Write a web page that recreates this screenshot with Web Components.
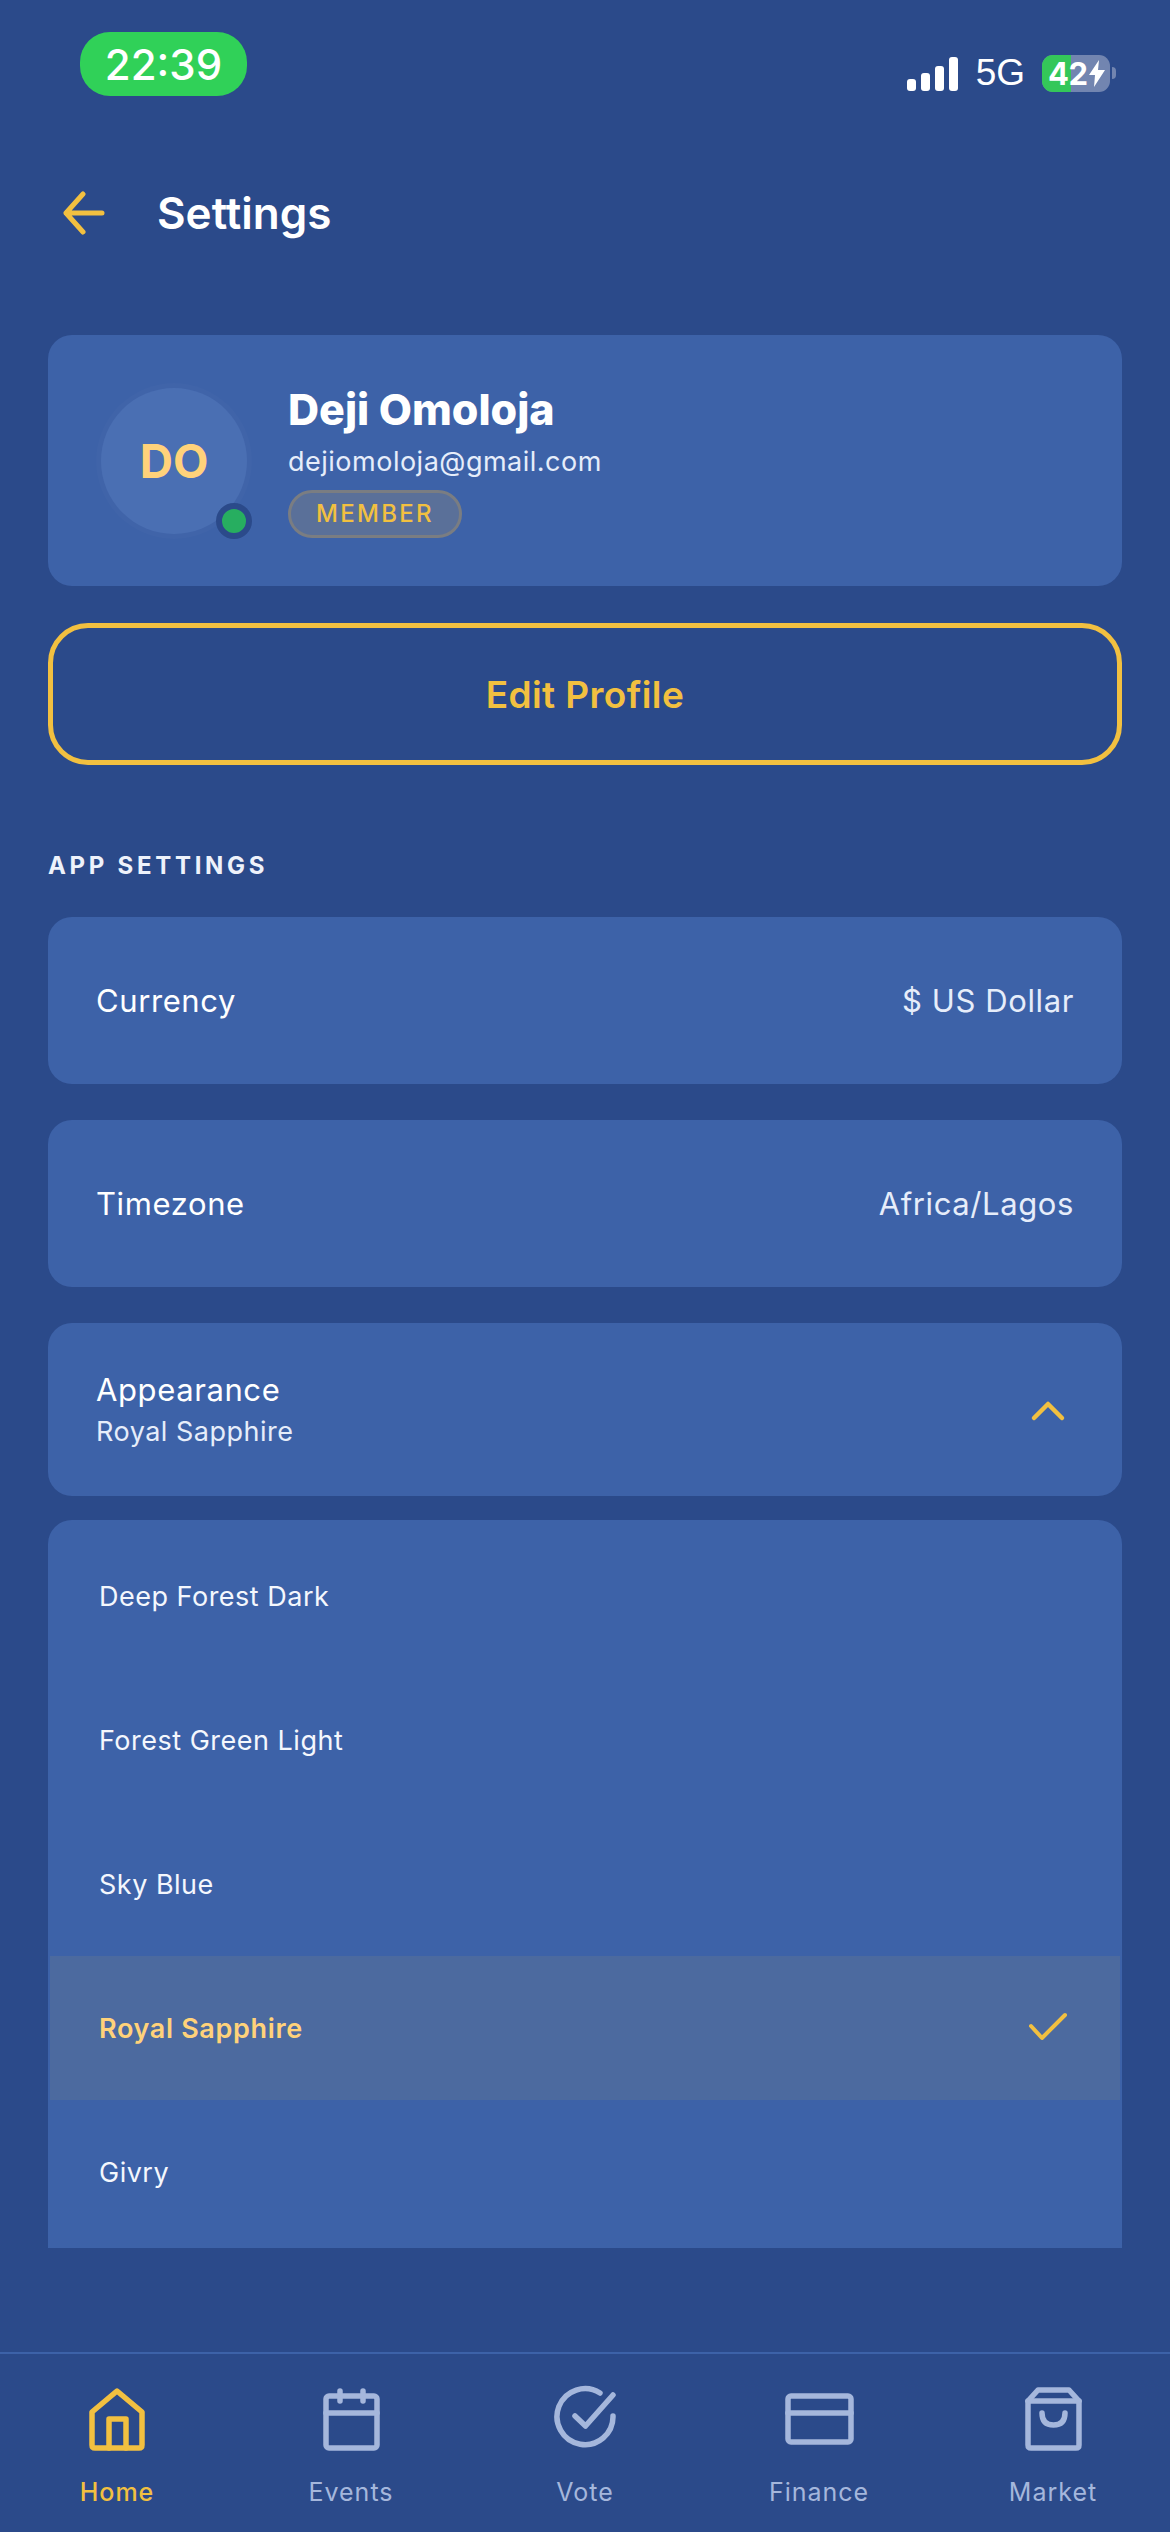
<!DOCTYPE html>
<html lang="en">
<head>
<meta charset="utf-8">
<title>Settings</title>
<style>
    html, body { margin: 0; padding: 0; background: #2b4a8a; }
    body { font-family: Inter, "Liberation Sans", sans-serif; color: #fff; }
</style>
</head>
<body>
<settings-screen>
    <status-bar slot="top" time="22:39" level="42"></status-bar>
    <page-header slot="top" title="Settings"></page-header>

    <profile-card initials="DO" name="Deji Omoloja" email="dejiomoloja@gmail.com" role="MEMBER"></profile-card>
    <outline-button>Edit Profile</outline-button>
    <section-label>APP SETTINGS</section-label>
    <setting-row label="Currency" value="$ US Dollar"></setting-row>
    <setting-row label="Timezone" value="Africa/Lagos"></setting-row>
    <appearance-row label="Appearance" value="Royal Sapphire"></appearance-row>
    <theme-list>
        <theme-option>Deep Forest Dark</theme-option>
        <theme-option>Forest Green Light</theme-option>
        <theme-option>Sky Blue</theme-option>
        <theme-option selected>Royal Sapphire</theme-option>
        <theme-option>Givry</theme-option>
    </theme-list>

    <bottom-nav slot="bottom">
        <nav-item icon="home" active>Home</nav-item>
        <nav-item icon="events">Events</nav-item>
        <nav-item icon="vote">Vote</nav-item>
        <nav-item icon="finance">Finance</nav-item>
        <nav-item icon="market">Market</nav-item>
    </bottom-nav>
</settings-screen>

<script>
class Base extends HTMLElement {
    constructor() {
        super();
        this.attachShadow({ mode: 'open' });
    }

    connectedCallback() {
        this.render();
    }
}

class SettingsScreen extends Base {
    render() {
        this.shadowRoot.innerHTML = `
      <style>
        :host { display: flex; flex-direction: column; width: 1170px; height: 2532px; background: #2b4a8a; overflow: hidden; }
        main { flex: 1; display: flex; flex-direction: column; padding: 0 48px; min-height: 0; }
      </style>
      <slot name="top"></slot>
      <main><slot></slot></main>
      <slot name="bottom"></slot>
    `;
    }
}

class StatusBar extends Base {
    render() {
        const time = this.getAttribute('time') || '';
        const level = this.getAttribute('level') || '';

        this.shadowRoot.innerHTML = `
      <style>
        :host { display: flex; justify-content: space-between; height: 96px; padding: 32px 54px 0 80px; }
        .time { width: 167px; height: 64px; border-radius: 30px; background: #30d158; display: flex; align-items: center; justify-content: center; font-size: 42px; font-weight: 500; }
        .right { display: flex; align-items: flex-start; padding-top: 23px; }
        .bars { display: flex; align-items: flex-end; gap: 5px; height: 34px; margin-top: 2px; }
        .bars i { display: block; width: 9px; background: #fff; border-radius: 3px; }
        .net { font-family: "Liberation Sans", sans-serif; font-size: 37px; line-height: 36px; margin: 0 17px 0 18px; }
        .battery { position: relative; width: 68px; height: 37px; border-radius: 11px; overflow: hidden; background: #7285b0; display: flex; align-items: center; font-size: 31px; font-weight: 700; }
        .fill { position: absolute; left: 0; top: 0; bottom: 0; width: 29px; background: #34c759; }
        .level { position: relative; margin-left: 6px; letter-spacing: -.5px; }
        .bolt { position: relative; margin-left: 1px; }
        .nib { width: 4px; height: 12px; margin: 12px 0 0 2px; background: #7285b0; border-radius: 0 4px 4px 0; }
      </style>
      <div class="time">${time}</div>
      <div class="right">
        <div class="bars"><i style="height:12px"></i><i style="height:18px"></i><i style="height:25px"></i><i style="height:34px"></i></div>
        <div class="net">5G</div>
        <div class="battery">
          <div class="fill"></div>
          <span class="level">${level}</span>
          <svg class="bolt" width="16" height="27" viewBox="0 0 16 27"><path d="M10 0 L0 15 H6 L5 27 L16 10 H9 Z" fill="#fff"/></svg>
        </div>
        <div class="nib"></div>
      </div>
    `;
    }
}

class PageHeader extends Base {
    render() {
        const title = this.getAttribute('title') || '';

        this.shadowRoot.innerHTML = `
      <style>
        :host { display: flex; align-items: center; height: 170px; padding: 0 0 0 62px; margin-bottom: 37px; }
        svg { display: block; margin-right: 51px; }
        h1 { margin: 0; font-size: 44px; font-weight: 600; color: #fff; }
      </style>
      <svg width="44" height="44" viewBox="0 0 44 44" fill="none" stroke="#f2c040" stroke-width="5" stroke-linecap="round" stroke-linejoin="round"><path d="M40 22 H4 M21 3 L4 22 L21 41"/></svg>
      <h1>${title}</h1>
    `;
    }
}

class ProfileCard extends Base {
    render() {
        const get = (n) => this.getAttribute(n) || '';

        this.shadowRoot.innerHTML = `
      <style>
        :host { display: flex; align-items: center; height: 251px; padding: 0 0 0 53px; background: #3d62a8; border-radius: 24px; }
        .avatar { position: relative; flex: none; width: 146px; height: 146px; border-radius: 50%; background: #4a6fb3; box-shadow: 0 0 0 5px rgba(255,255,255,.015); display: flex; align-items: center; justify-content: center; color: #ffd27a; font-size: 46px; font-weight: 700; }
        .dot { position: absolute; left: 115px; top: 115px; width: 24px; height: 24px; border: 6px solid #2b4a8a; border-radius: 50%; background: #27ae60; }
        .info { margin-left: 41px; display: flex; flex-direction: column; align-items: flex-start; }
        .name { font-size: 43px; line-height: 50px; font-weight: 800; color: #fff; }
        .email { font-size: 27px; line-height: 34px; margin-top: 11px; letter-spacing: .5px; color: #e6edfa; }
        .role { margin-top: 11px; height: 42px; padding: 0 25px; border: 3px solid #7a7d82; border-radius: 24px; background: #5a7099; color: #f2c040; font-size: 24px; line-height: 42px; font-weight: 500; letter-spacing: 2.3px; }
      </style>
      <div class="avatar">${get('initials')}<span class="dot"></span></div>
      <div class="info">
        <div class="name">${get('name')}</div>
        <div class="email">${get('email')}</div>
        <div class="role">${get('role')}</div>
      </div>
    `;
    }
}

class OutlineButton extends Base {
    render() {
        this.shadowRoot.innerHTML = `
      <style>
        :host { display: flex; align-items: center; justify-content: center; height: 132px; margin-top: 37px; border: 5px solid #f2c040; border-radius: 40px; color: #f2c040; font-size: 37px; font-weight: 600; letter-spacing: .4px; }
      </style>
      <slot></slot>
    `;
    }
}

class SectionLabel extends Base {
    render() {
        this.shadowRoot.innerHTML = `
      <style>
        :host { display: block; margin: 86px 0 36px; height: 30px; color: #eef2fb; font-size: 24px; line-height: 30px; font-weight: 700; letter-spacing: 3.7px; }
      </style>
      <slot></slot>
    `;
    }
}

class SettingRow extends Base {
    render() {
        const label = this.getAttribute('label') || '';
        const value = this.getAttribute('value') || '';

        this.shadowRoot.innerHTML = `
      <style>
        :host { display: flex; align-items: center; justify-content: space-between; height: 167px; padding: 0 48px; margin-bottom: 36px; background: #3d62a8; border-radius: 24px; font-size: 31px; letter-spacing: .6px; color: #fff; }
        .value { color: #e6edfa; }
      </style>
      <span>${label}</span>
      <span class="value">${value}</span>
    `;
    }
}

class AppearanceRow extends Base {
    render() {
        const label = this.getAttribute('label') || '';
        const value = this.getAttribute('value') || '';

        this.shadowRoot.innerHTML = `
      <style>
        :host { display: flex; align-items: center; justify-content: space-between; height: 173px; padding: 0 48px; background: #3d62a8; border-radius: 24px; color: #fff; }
        .label { font-size: 31px; line-height: 40px; letter-spacing: .6px; }
        .value { margin-top: 4px; font-size: 27px; line-height: 36px; letter-spacing: .5px; color: #e6edfa; }
        svg { display: block; margin-right: 8px; }
      </style>
      <div>
        <div class="label">${label}</div>
        <div class="value">${value}</div>
      </div>
      <svg width="36" height="24" viewBox="0 0 36 24" fill="none" stroke="#f2c040" stroke-width="4.5" stroke-linecap="round" stroke-linejoin="round"><path d="M4 20 L18 6 L32 20"/></svg>
    `;
    }
}

class ThemeList extends Base {
    render() {
        this.shadowRoot.innerHTML = `
      <style>
        :host { display: flex; flex-direction: column; height: 728px; margin-top: 24px; box-sizing: border-box; padding: 4px 2px 0; background: #3d62a8; border-radius: 24px 24px 0 0; overflow: hidden; }
      </style>
      <slot></slot>
    `;
    }
}

class ThemeOption extends Base {
    render() {
        const check = this.hasAttribute('selected')
            ? `<svg width="40" height="32" viewBox="0 0 40 32" fill="none" stroke="#f2c040" stroke-width="4" stroke-linecap="round" stroke-linejoin="round"><path d="M3 14 L14 26 L37 3"/></svg>`
            : '';

        this.shadowRoot.innerHTML = `
      <style>
        :host { display: flex; flex: none; align-items: center; justify-content: space-between; height: 144px; padding: 0 52px 0 49px; box-sizing: border-box; font-size: 27px; letter-spacing: .5px; color: #f4f7fd; }
        :host([selected]) { background: #4c6a9f; color: #ffd27a; font-weight: 600; letter-spacing: .65px; }
      </style>
      <span><slot></slot></span>
      ${check}
    `;
    }
}

class BottomNav extends Base {
    render() {
        this.shadowRoot.innerHTML = `
      <style>
        :host { display: grid; grid-template-columns: repeat(5, 1fr); height: 180px; box-sizing: border-box; border-top: 2px solid #3d62a8; background: #2b4a8a; }
      </style>
      <slot></slot>
    `;
    }
}

// all drawn on a 72px box, stroke 5.5
const NAV_ICONS = {
    home: '<path d="M36 7 L11 28 V61 Q11 64 14 64 H58 Q61 64 61 61 V28 Z"/><path d="M28 64 V35 H45 V64"/>',
    events: '<rect x="11" y="12" width="51" height="52" rx="3"/><path d="M11 29 H62 M25 7 V17 M48 7 V17"/>',
    vote: '<path d="M64 32 A28 28 0 1 1 51 9"/><path d="M26 32 L36.5 42 L64 11"/>',
    finance: '<rect x="5" y="12" width="63" height="46" rx="3"/><path d="M5 29 H68"/>',
    market: '<path d="M11 17 V61 Q11 64 14 64 H59 Q62 64 62 61 V17 Z"/><path d="M11 17 L21 6 H52 L62 17"/><path d="M25 29 Q25 41 36.5 41 Q48 41 48 29"/>'
};

class NavItem extends Base {
    render() {
        const icon = NAV_ICONS[this.getAttribute('icon')] || '';

        this.shadowRoot.innerHTML = `
      <style>
        :host { display: flex; flex-direction: column; align-items: center; padding-top: 30px; color: #a5b7dc; font-size: 25px; font-weight: 400; letter-spacing: 1px; }
        :host([active]) { color: #f2c040; font-weight: 500; }
        svg { display: block; margin-bottom: 21px; }
      </style>
      <svg width="72" height="72" viewBox="0 0 72 72" fill="none" stroke="currentColor" stroke-width="5.5" stroke-linecap="round" stroke-linejoin="round">${icon}</svg>
      <slot></slot>
    `;
    }
}

customElements.define('settings-screen', SettingsScreen);
customElements.define('status-bar', StatusBar);
customElements.define('page-header', PageHeader);
customElements.define('profile-card', ProfileCard);
customElements.define('outline-button', OutlineButton);
customElements.define('section-label', SectionLabel);
customElements.define('setting-row', SettingRow);
customElements.define('appearance-row', AppearanceRow);
customElements.define('theme-list', ThemeList);
customElements.define('theme-option', ThemeOption);
customElements.define('bottom-nav', BottomNav);
customElements.define('nav-item', NavItem);
</script>
</body>
</html>
